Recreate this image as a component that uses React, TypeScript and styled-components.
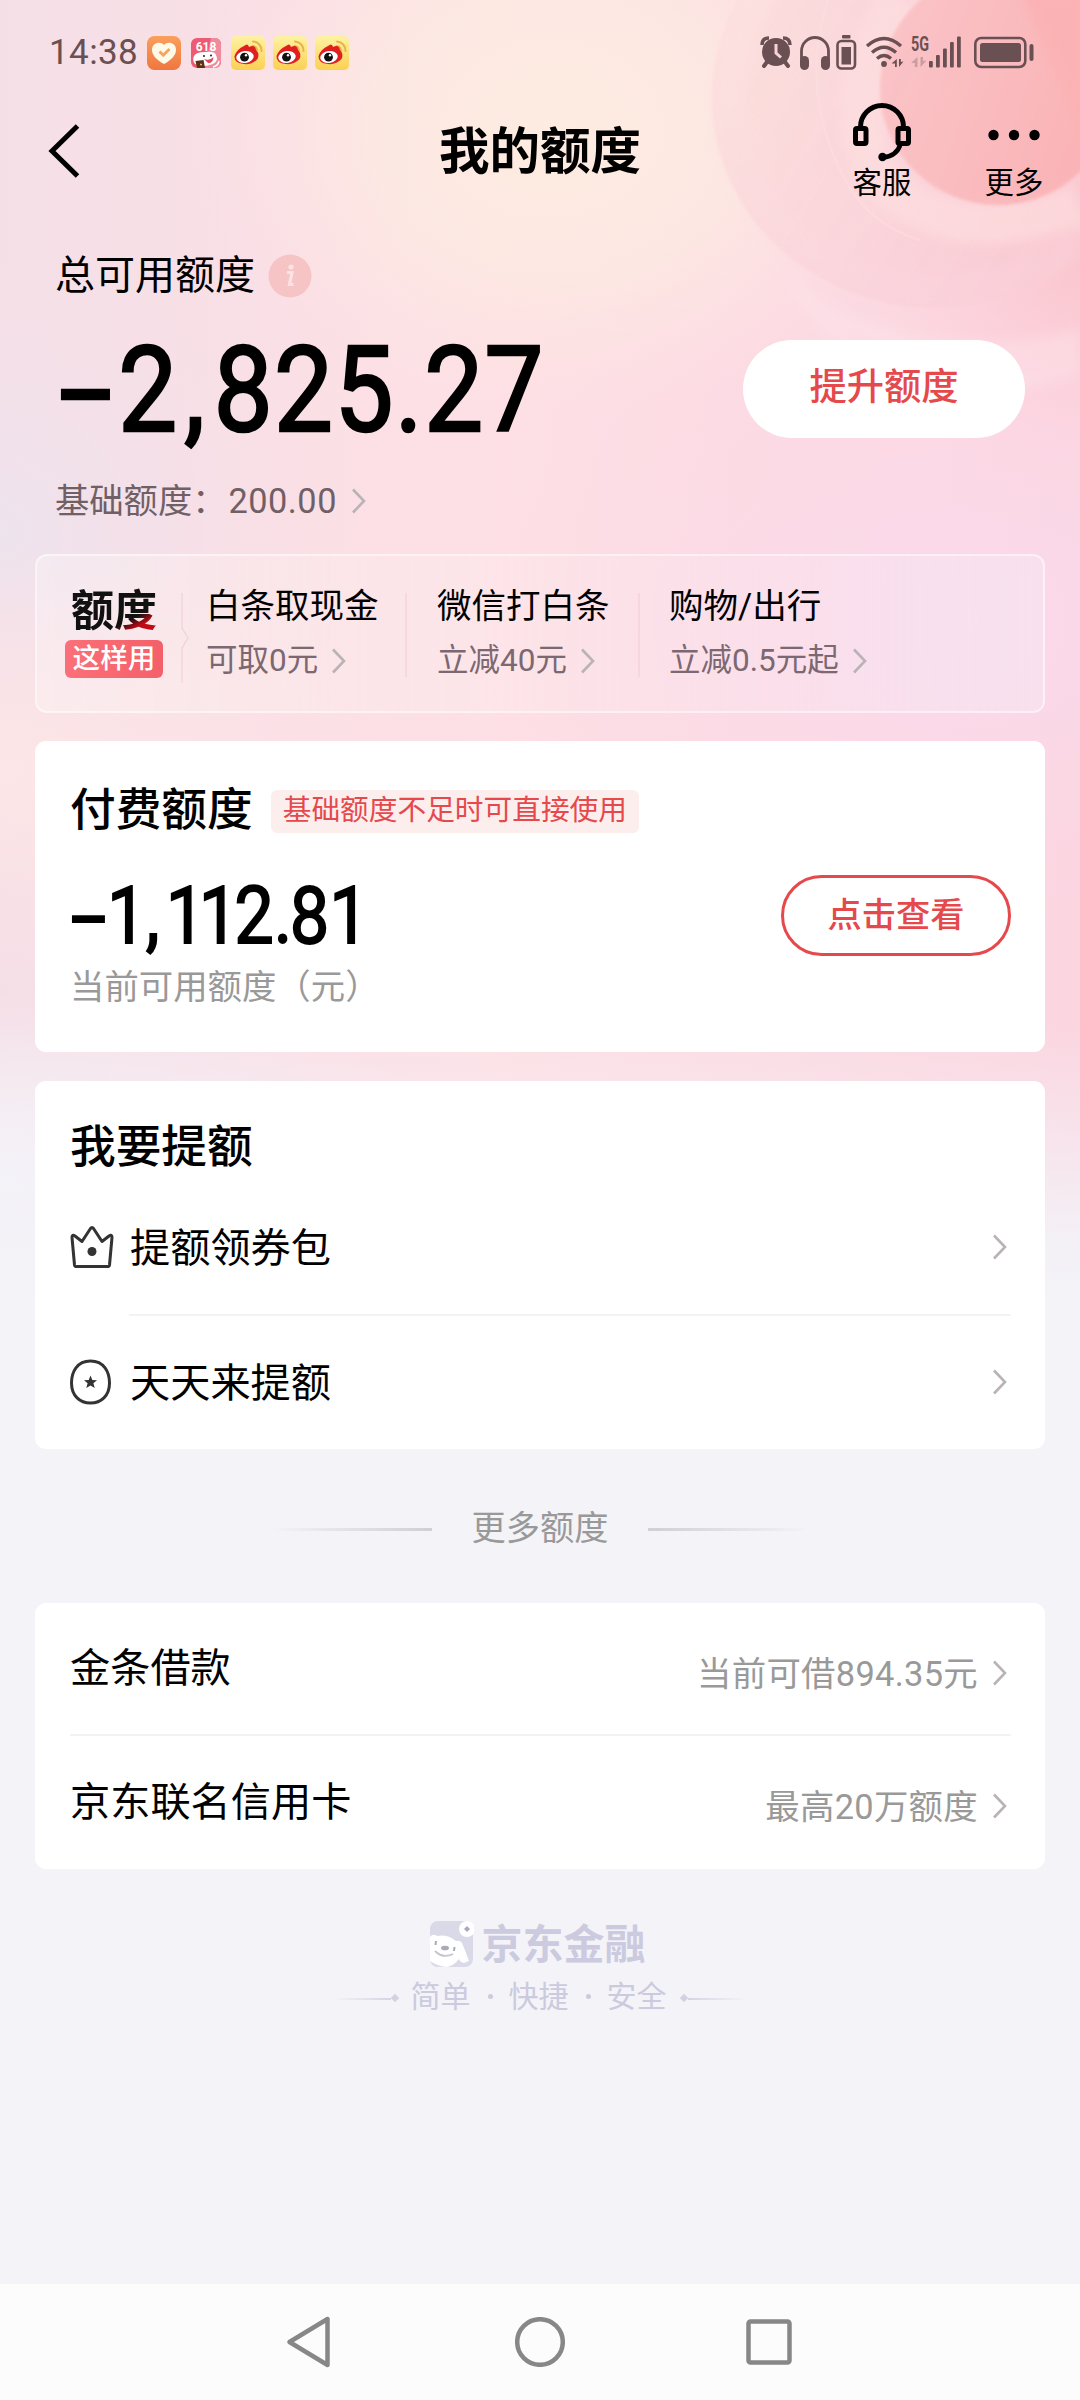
import React from "react";
import styled, { createGlobalStyle } from "styled-components";

const INK = "#6a5053";
const RED = "#e5494c";

const GlobalStyle = createGlobalStyle`
  * { box-sizing: border-box; }
  html, body { margin: 0; padding: 0; background: #f3f3f8; }
  body { font-family: Roboto, "Noto Sans CJK SC", sans-serif; color: #000; }
`;

const Screen = styled.div`
  position: relative;
  width: 1080px;
  height: 2400px;
  overflow: hidden;
  background: #f3f3f8;
  display: flex;
  flex-direction: column;
`;

const Backdrop = styled.svg`
  position: absolute;
  inset: 0 auto auto 0;
  width: 1080px;
  height: 1300px;
`;

const Content = styled.main`
  position: relative;
  flex: 1;
  display: flex;
  flex-direction: column;
`;

/* ---- status bar ---- */

const StatusBar = styled.div`
  height: 106px;
  padding: 0 44px 0 49px;
  display: flex;
  align-items: center;
  justify-content: space-between;
  color: ${INK};
`;

const StatusGroup = styled.div`
  display: flex;
  align-items: center;
`;

const Clock = styled.span`
  width: 98px;
  font-size: 35px;
  line-height: 40px;
  letter-spacing: 0.4px;
`;

const AppIcons = styled.div`
  display: flex;
  align-items: center;
  gap: 8px;
`;

/* ---- title bar ---- */

const TitleBar = styled.header`
  height: 106px;
  padding: 0 36px 17px;
  display: grid;
  grid-template-columns: 1fr auto 1fr;
  grid-template-rows: 89px;
  align-items: center;
`;

const BackIcon = styled.svg`
  margin-left: 10px;
`;

const Title = styled.h1`
  margin: 0;
  padding-top: 2px;
  font-size: 50.5px;
  line-height: 88px;
  font-weight: 700;
`;

const Actions = styled.div`
  justify-self: end;
  display: flex;
  gap: 72px;
`;

const Action = styled.div`
  display: flex;
  flex-direction: column;
  align-items: center;
  font-size: 29.4px;
  line-height: 42px;
  padding-top: 5px;
`;

/* ---- hero ---- */

const Hero = styled.section`
  height: 342px;
  padding: 36px 55px 0;
  display: grid;
  grid-template-columns: 1fr auto;
`;

const HeroText = styled.div`
  display: flex;
  flex-direction: column;
`;

const HeroLabel = styled.div`
  display: flex;
  align-items: center;
  gap: 13px;
  height: 56px;
  font-size: 40px;
  line-height: 56px;
`;

const Figure = styled.div<{ $size: number; $height: number; $indent: number }>`
  height: ${(p) => p.$height}px;
  padding-left: ${(p) => p.$indent}px;
  font-size: ${(p) => p.$size}px;
  line-height: ${(p) => p.$height + 28}px;
  font-weight: 400;
  -webkit-text-stroke: ${(p) => p.$size * 0.022}px #000;
  white-space: nowrap;
  display: flex;
  transform: scaleX(0.88);
  transform-origin: left center;
`;

const SignSlot = styled.span<{ $width: number }>`
  display: flex;
  justify-content: flex-start;
  width: ${(p) => p.$width}px;
`;

const Sign = styled.span`
  transform: scaleX(1.8);
  transform-origin: left center;
`;

const Part = styled.span<{ $gap?: number }>`
  letter-spacing: ${(p) => p.$gap || 0}px;
`;

const BaseLimit = styled.div`
  margin-top: 27px;
  display: flex;
  align-items: center;
  height: 48px;
  font-size: 34.3px;
  line-height: 48px;
  color: #715f66;
`;

const BaseValue = styled.span`
  margin: 0 15px 0 2px;
  letter-spacing: 0.5px;
`;

const RaiseButton = styled.button`
  margin-top: 92px;
  width: 282px;
  height: 98px;
  padding: 0 0 4px;
  border: 0;
  border-radius: 49px;
  background: #fff;
  color: ${RED};
  font: 500 37.3px/60px Roboto, "Noto Sans CJK SC", sans-serif;
`;

/* ---- usage strip ---- */

const UsageStrip = styled.section`
  margin: 0 35px 0 35px;
  height: 159px;
  border: 2px solid rgba(255, 255, 255, 0.5);
  border-radius: 12px;
  background: linear-gradient(90deg, rgba(255, 255, 255, 0.28), rgba(255, 245, 240, 0.3) 20%, rgba(255, 255, 255, 0.14) 60%, rgba(245, 240, 248, 0.35));
  display: flex;
  padding: 28px 0 0 27px;
`;

const UsageMark = styled.div`
  width: 100px;
  display: flex;
  flex-direction: column;
  align-items: center;
`;

const MarkTitle = styled.div`
  height: 54px;
  font-size: 43px;
  line-height: 55px;
  font-weight: 700;
  background: linear-gradient(152deg, #111 67%, #c00a14 78%);
  -webkit-background-clip: text;
  background-clip: text;
  color: transparent;
`;

const MarkBadge = styled.div`
  margin-top: 2px;
  width: 98px;
  height: 38px;
  border-radius: 6px;
  background: linear-gradient(90deg, #fb7078, #f4606a);
  color: #fff;
  font-size: 27.6px;
  line-height: 38px;
  font-weight: 500;
  text-align: center;
`;

const UsageDivider = styled.i`
  width: 2px;
  height: 84px;
  margin-top: 9px;
  background: rgba(200, 120, 150, 0.1);
`;

const Notch = styled.svg`
  margin: 9px 0 0 14px;
`;

const UsageItem = styled.div<{ $width: number; $left: number }>`
  width: ${(p) => p.$width}px;
  margin-left: ${(p) => p.$left}px;
  display: flex;
  flex-direction: column;
`;

const UsageName = styled.div`
  font-size: 34.5px;
  line-height: 45px;
  white-space: nowrap;
`;

const UsageHint = styled.div`
  margin-top: 8px;
  display: flex;
  align-items: center;
  gap: 14px;
  font-size: 31.5px;
  line-height: 48px;
  color: #7b6871;
  white-space: nowrap;
`;

/* ---- cards ---- */

const Card = styled.section<{ $top: number; $height: number }>`
  margin: ${(p) => p.$top}px 35px 0;
  height: ${(p) => p.$height}px;
  padding: 0 34px 0 35px;
  border-radius: 11px;
  background: #fff;
`;

const CardTitle = styled.h2<{ $top?: number }>`
  margin: 0;
  padding-top: ${(p) => p.$top || 0}px;
  font-size: 45.7px;
  line-height: 64px;
  font-weight: 500;
`;

const PaidHead = styled.div`
  padding-top: 38px;
  height: 101px;
  display: flex;
  align-items: center;
  gap: 18px;
`;

const Tag = styled.span`
  height: 43px;
  margin-top: 1px;
  padding: 0 12px;
  border-radius: 6px;
  background: #fdeeee;
  color: ${RED};
  font-size: 28.7px;
  line-height: 41px;
`;

const PaidBody = styled.div`
  display: flex;
  justify-content: space-between;
`;

const PaidNote = styled.div`
  font-size: 34.4px;
  line-height: 48px;
  color: #999;
`;

const ViewButton = styled.button`
  margin-top: 33px;
  width: 230px;
  height: 81px;
  padding: 0 0 2px;
  border: 3px solid ${RED};
  border-radius: 41px;
  background: #fff;
  color: ${RED};
  font: 500 34.2px/50px Roboto, "Noto Sans CJK SC", sans-serif;
`;

const Row = styled.div<{ $height: number }>`
  height: ${(p) => p.$height}px;
  display: flex;
  align-items: center;
  padding-right: 4px;
`;

const RowIcon = styled.span`
  width: 60px;
  height: 48px;
  display: flex;
  align-items: center;
`;

const RowLabel = styled.span<{ $drop?: number }>`
  flex: 1;
  padding-top: ${(p) => p.$drop || 0}px;
  font-size: 40.2px;
  line-height: 56px;
`;

const RowValue = styled.span`
  padding-top: 10px;
  margin-right: 15px;
  font-size: 34.4px;
  line-height: 48px;
  letter-spacing: 0.3px;
  color: #999;
`;

const ChevronBox = styled.span<{ $drop?: number }>`
  display: flex;
  padding-top: ${(p) => p.$drop || 0}px;
`;

const Rule = styled.hr<{ $inset?: number }>`
  margin: 0 0 0 ${(p) => p.$inset || 0}px;
  border: 0;
  height: 2px;
  background: #f3f3f4;
`;

/* ---- section heading and footer ---- */

const MoreHeading = styled.div`
  margin-top: 55px;
  height: 48px;
  display: flex;
  align-items: center;
  justify-content: center;
  gap: 40px;
  font-size: 34.2px;
  line-height: 48px;
  color: #999;
`;

const FadeLine = styled.i<{ $flip?: boolean; $width: number; $color: string; $thick: number }>`
  width: ${(p) => p.$width}px;
  height: ${(p) => p.$thick}px;
  margin-top: 3px;
  background: linear-gradient(${(p) => (p.$flip ? "270deg" : "90deg")}, transparent, ${(p) => p.$color});
`;

const Footer = styled.footer`
  margin-top: 45px;
  display: flex;
  flex-direction: column;
  align-items: center;
  color: #cbcadf;
`;

const Brand = styled.div`
  height: 60px;
  padding: 2px 6px 0 0;
  display: flex;
  align-items: center;
  gap: 8px;
  font-size: 41px;
  line-height: 60px;
  font-weight: 700;
`;

const BrandMark = styled.svg`
  margin-bottom: 2px;
`;

const Motto = styled.div`
  display: flex;
  align-items: center;
  justify-content: center;
  height: 44px;
  padding: 2px 2px 0 0;
  font-size: 30px;
  line-height: 44px;
`;

const MottoWords = styled.span`
  display: flex;
  margin: 0 13px 0 12px;
`;

const MottoDot = styled.i`
  width: 5px;
  height: 5px;
  border-radius: 3px;
  margin: 19px 16px 0 17px;
  background: #cbcadf;
`;

const Diamond = styled.i`
  width: 6px;
  height: 6px;
  margin: 2px 1px 0;
  transform: rotate(45deg);
  background: #d3d2e2;
`;

const NavBar = styled.nav`
  position: relative;
  height: 116px;
  background: #fcfcfc;
  display: flex;
  justify-content: center;
  align-items: center;
  gap: 184px;
`;

const RecentsIcon = styled.svg`
  margin: 0 3px 0 -3px;
`;

const Chevron = () => (
  <svg width="14" height="26" viewBox="0 0 14 26" fill="none" stroke="#b9b3b6" strokeWidth="2.6">
    <path d="M1 1.5 L12 13 L1 24.5" />
  </svg>
);

const Weibo = () => (
  <svg width="34" height="34" viewBox="0 0 34 34">
    <defs>
      <linearGradient id="wb" x1="0" y1="0" x2="0" y2="1">
        <stop offset="0" stopColor="#fdf3a4" />
        <stop offset="1" stopColor="#fbd053" />
      </linearGradient>
    </defs>
    <rect width="34" height="34" rx="5" fill="url(#wb)" />
    <path d="M22 5.500 A9 9 0 0 1 30.500 15 M21.500 10 A5 5 0 0 1 26 14.500" fill="none" stroke="#eeb04a" strokeWidth="2" strokeLinecap="round" />
    <path d="M13 10 Q17 6.500 18 11 Q24 8 25 14 Q29 18 26.500 23 Q21 29 13 28 Q3 27 3.500 20 Q6 13 13 10Z" fill="#e02020" />
    <ellipse cx="14" cy="21" rx="8.800" ry="6" fill="#fff" transform="rotate(-8 14 21)" />
    <circle cx="13.500" cy="21.200" r="4.400" fill="#111" />
    <circle cx="15" cy="19.300" r="1.200" fill="#fff" />
  </svg>
);

const HeartApp = () => (
  <svg width="34" height="34" viewBox="0 0 34 34">
    <defs>
      <linearGradient id="hb" x1="0" y1="0" x2="0" y2="1">
        <stop offset="0" stopColor="#fa9f5c" />
        <stop offset="1" stopColor="#ef7740" />
      </linearGradient>
    </defs>
    <rect width="34" height="34" rx="7.500" fill="url(#hb)" />
    <path d="M17 28 C8 23 5 18 5 14 C5 6.500 13.500 5 17 9 C20.500 5 29 6.500 29 14 C29 18 26 23 17 28Z" fill="#fff9ea" />
    <path d="M12.500 15.500 L16.300 19.200 L22.500 13" fill="none" stroke="#f5a45a" strokeWidth="2.800" />
  </svg>
);

const Sale618 = () => (
  <svg width="34" height="34" viewBox="-2 -2 34 34">
    <rect width="30" height="30" rx="6" fill="#ee5a73" />
    <path d="M20 0 H24 A6 6 0 0 1 30 6 V24 A6 6 0 0 1 24 30 H14Z" fill="#f08a9d" />
    <text x="15" y="13" textAnchor="middle" fontSize="12" fontWeight="700" fill="#fff" fontFamily="Roboto">618</text>
    <path d="M3 18 Q5 14 14 14 Q24 13 25 17 Q28 23 22 26 Q12 30 4 26 Q1 22 3 18Z" fill="#fff" />
    <path d="M13 21 Q19 23 22.500 19 Q22 25.500 17 25Z" fill="#e24b5e" />
    <circle cx="13" cy="18" r="1" fill="#222" />
    <circle cx="20" cy="17.500" r="1" fill="#222" />
    <path d="M4.500 23 L12.500 22 L14 30 H6Z" fill="#5a3018" />
    <path d="M9 26.500h2" stroke="#e9b35a" strokeWidth="1.500" />
    <path d="M22 29 Q27 28 28 23" fill="none" stroke="#fff" strokeWidth="1.500" />
  </svg>
);

const StatusIcons = () => (
  <svg width="276" height="38" viewBox="760 34 276 38" fill={INK}>
    {/* alarm clock */}
    <circle cx="776" cy="52" r="14" />
    <path d="M762 45 Q762 38 769 38 M790 45 Q790 38 783 38" fill="none" stroke={INK} strokeWidth="3.500" />
    <path d="M767 62 L764 66 M785 62 L788 66" stroke={INK} strokeWidth="4" strokeLinecap="round" />
    <path d="M776 44 V53 L781 57.500" fill="none" stroke="#f7d3d6" strokeWidth="3" />
    {/* headphones */}
    <path d="M801.500 60 V51 A13.300 13.300 0 0 1 828.500 51 V60" fill="none" stroke={INK} strokeWidth="2.800" />
    <rect x="800" y="56" width="9" height="14" rx="4.500" />
    <rect x="821" y="56" width="9" height="14" rx="4.500" />
    {/* accessory battery */}
    <rect x="842" y="35" width="8.500" height="3.500" rx="1" />
    <rect x="837.500" y="41" width="17.500" height="27.500" rx="4" fill="none" stroke={INK} strokeWidth="2.600" />
    <rect x="841.500" y="47" width="9.500" height="17.500" />
    {/* wi-fi */}
    <g fill="none" stroke={INK} strokeWidth="3.400">
      <path d="M867 46 Q884 31 901 46" />
      <path d="M872 52.500 Q884 42 896 52.500" />
      <path d="M877 58.500 Q884 52.500 891 58.500" />
    </g>
    <circle cx="884" cy="64" r="2.900" />
    <path d="M896.800 59 V67 H895 V63.500 H891.500Z M899 67 V59 H900.800 V62 L903.500 61.500Z" />
    {/* cellular */}
    <text x="911" y="50.500" fontSize="19.500" fontWeight="700" fontFamily="Roboto" textLength="18" lengthAdjust="spacingAndGlyphs">5G</text>
    <path d="M917.500 57 V67 H914.800 V63 H911Z M920.500 67 V57 H923 V61 L926.500 60.500 Z" opacity="0.32" />
    <rect x="929" y="61" width="3.800" height="6.500" rx="1" />
    <rect x="936" y="55" width="3.800" height="12.500" rx="1" />
    <rect x="943" y="48.500" width="3.800" height="19" rx="1" />
    <rect x="950" y="42" width="3.800" height="25.500" rx="1" />
    <rect x="957" y="36.500" width="3.800" height="31" rx="1" />
    {/* battery */}
    <rect x="975.300" y="38" width="50" height="29" rx="6" fill="none" stroke={INK} strokeWidth="2.600" />
    <rect x="980" y="43" width="41" height="19" rx="2.500" />
    <rect x="1029.500" y="44" width="4" height="17" rx="2" />
  </svg>
);

const Headset = () => (
  <svg width="60" height="60" viewBox="0 0 60 60" fill="none" stroke="#000" strokeWidth="5">
    <path d="M8.500 25 A21.500 21.500 0 0 1 51.500 25" />
    <rect x="3.500" y="26.500" width="10.500" height="15" rx="1.500" />
    <rect x="46" y="26.500" width="10.500" height="15" rx="1.500" />
    <path d="M48.500 42 Q45 54 31 55.500" strokeWidth="4.500" />
    <circle cx="30.500" cy="55" r="4.200" fill="#000" stroke="none" />
  </svg>
);

const Dots = () => (
  <svg width="60" height="60" viewBox="0 0 60 60">
    <circle cx="9.500" cy="33" r="5.200" />
    <circle cx="30" cy="33" r="5.200" />
    <circle cx="50.500" cy="33" r="5.200" />
  </svg>
);

const InfoDot = () => (
  <svg width="44" height="44" viewBox="0 0 44 44">
    <circle cx="22" cy="22" r="21.500" fill="#f7c4c6" />
    <circle cx="23" cy="13" r="2.600" fill="#fbe3e3" />
    <path d="M19 18.500 H24 L21.500 30.500 H25.500" fill="none" stroke="#fbe3e3" strokeWidth="3.200" />
  </svg>
);

const Scenery = () => (
  <Backdrop viewBox="0 0 1080 1300">
    <defs>
      <linearGradient id="base" x1="0" y1="0" x2="1" y2="0">
        <stop offset="0" stopColor="#f5dfe7" />
        <stop offset="0.450" stopColor="#fde0e5" />
        <stop offset="1" stopColor="#fbd5e0" />
      </linearGradient>
      <radialGradient id="cream">
        <stop offset="0" stopColor="#fdece1" />
        <stop offset="0.500" stopColor="#fdeae2" stopOpacity="0.800" />
        <stop offset="1" stopColor="#fde4e4" stopOpacity="0" />
      </radialGradient>
      <radialGradient id="lilac">
        <stop offset="0" stopColor="#ece4ef" stopOpacity="0.850" />
        <stop offset="1" stopColor="#f3e0ea" stopOpacity="0" />
      </radialGradient>
      <radialGradient id="orchid">
        <stop offset="0" stopColor="#fad9ec" />
        <stop offset="1" stopColor="#fcd9e6" stopOpacity="0" />
      </radialGradient>
      <radialGradient id="blush">
        <stop offset="0" stopColor="#fde6e6" />
        <stop offset="1" stopColor="#fde3e6" stopOpacity="0" />
      </radialGradient>
      <linearGradient id="core" x1="0" y1="0" x2="1" y2="0.300">
        <stop offset="0" stopColor="#fbc4c7" />
        <stop offset="1" stopColor="#fbb2b4" />
      </linearGradient>
      <radialGradient id="glow">
        <stop offset="0" stopColor="#fab8be" stopOpacity="0.650" />
        <stop offset="1" stopColor="#fcc8d2" stopOpacity="0" />
      </radialGradient>
      <linearGradient id="orb" x1="0" y1="0" x2="1" y2="0.600">
        <stop offset="0" stopColor="#fde2dd" stopOpacity="0.900" />
        <stop offset="0.450" stopColor="#f9d3d7" stopOpacity="0.750" />
        <stop offset="1" stopColor="#f9c9d2" stopOpacity="0.500" />
      </linearGradient>
      <linearGradient id="rim" x1="0" y1="0" x2="0.500" y2="1">
        <stop offset="0" stopColor="#fee5e1" />
        <stop offset="1" stopColor="#fbd6df" stopOpacity="0.400" />
      </linearGradient>
      <linearGradient id="fade" x1="0" y1="0" x2="0" y2="1">
        <stop offset="0" stopColor="#f3f3f8" stopOpacity="0" />
        <stop offset="0.800" stopColor="#f3f3f8" stopOpacity="0.920" />
        <stop offset="1" stopColor="#f3f3f8" />
      </linearGradient>
      <radialGradient id="mist">
        <stop offset="0" stopColor="#f5f2f8" />
        <stop offset="1" stopColor="#f5eef5" stopOpacity="0" />
      </radialGradient>
      <filter id="soft" x="-20%" y="-20%" width="140%" height="140%">
        <feGaussianBlur stdDeviation="6" />
      </filter>
      <filter id="edge" x="-5%" y="-5%" width="110%" height="110%">
        <feGaussianBlur stdDeviation="1.500" />
      </filter>
    </defs>
    <rect width="1080" height="1300" fill="url(#base)" />
    <ellipse cx="0" cy="530" rx="280" ry="280" fill="url(#lilac)" />
    <ellipse cx="560" cy="130" rx="370" ry="290" fill="url(#cream)" />
    <ellipse cx="0" cy="770" rx="420" ry="220" fill="url(#blush)" />
    <ellipse cx="960" cy="620" rx="480" ry="330" fill="url(#orchid)" />
    <ellipse cx="0" cy="1180" rx="500" ry="190" fill="url(#mist)" />
    <ellipse cx="1090" cy="240" rx="220" ry="220" fill="url(#glow)" />
    <path d="M780 270 Q860 440 1080 376 V330 Q900 370 780 270Z" fill="#fde2e9" opacity="0.500" filter="url(#soft)" />
    <ellipse cx="936" cy="98" rx="224" ry="210" fill="url(#orb)" opacity="0.850" filter="url(#edge)" />
    <ellipse cx="936" cy="98" rx="206" ry="194" fill="none" stroke="url(#rim)" strokeWidth="32" opacity="0.750" filter="url(#soft)" />
    <path d="M828 0 Q798 90 845 180 Q870 225 920 240" fill="none" stroke="#fcdfe0" strokeWidth="2.500" opacity="0.450" />
    <path d="M900 0 Q830 110 885 185 Q960 250 1080 205" fill="none" stroke="#fee0e0" strokeWidth="40" opacity="0.600" filter="url(#soft)" />
    <ellipse cx="998" cy="88" rx="118" ry="117" fill="url(#core)" opacity="0.920" filter="url(#edge)" />
    <path d="M1020 -10 H1090 V160 Z" fill="#fbb2b4" filter="url(#soft)" />
    <rect y="1020" width="1080" height="280" fill="url(#fade)" />
  </Backdrop>
);

const usages = [
  { name: "白条取现金", hint: "可取0元", width: 199, left: 2 },
  { name: "微信打白条", hint: "立减40元", width: 201, left: 30 },
  { name: "购物/出行", hint: "立减0.5元起", width: 220, left: 29 },
];

export default function App() {
  return (
    <Screen>
      <GlobalStyle />
      <Scenery />
      <Content>
        <StatusBar>
          <StatusGroup>
            <Clock>14:38</Clock>
            <AppIcons>
              <HeartApp />
              <Sale618 />
              <Weibo />
              <Weibo />
              <Weibo />
            </AppIcons>
          </StatusGroup>
          <StatusIcons />
        </StatusBar>

        <TitleBar>
          <BackIcon width="34" height="56" viewBox="0 0 34 56" fill="none" stroke="#000" strokeWidth="5">
            <path d="M31.500 3 L6 28 L31.500 53" />
          </BackIcon>
          <Title>我的额度</Title>
          <Actions>
            <Action>
              <Headset />
              客服
            </Action>
            <Action>
              <Dots />
              更多
            </Action>
          </Actions>
        </TitleBar>

        <Hero>
          <HeroText>
            <HeroLabel>
              总可用额度
              <InfoDot />
            </HeroLabel>
            <Figure $size={119} $height={146} $indent={5}>
              <SignSlot $width={67}>
                <Sign>-</Sign>
              </SignSlot>
              <Part $gap={8}>2</Part>
              <Part $gap={10}>,</Part>
              <Part $gap={1.8}>825.27</Part>
            </Figure>
            <BaseLimit>
              基础额度：
              <BaseValue>200.00</BaseValue>
              <Chevron />
            </BaseLimit>
          </HeroText>
          <RaiseButton>提升额度</RaiseButton>
        </Hero>

        <UsageStrip>
          <UsageMark>
            <MarkTitle>额度</MarkTitle>
            <MarkBadge>这样用</MarkBadge>
          </UsageMark>
          <Notch width="26" height="90" viewBox="0 0 26 90" fill="none" stroke="rgba(200,120,150,0.16)" strokeWidth="1.500">
            <path d="M4 0 V35 L10 45 L4 55 V90" />
          </Notch>
          {usages.map((u, i) => (
            <React.Fragment key={u.name}>
              {i > 0 && <UsageDivider />}
              <UsageItem $width={u.width} $left={u.left}>
                <UsageName>{u.name}</UsageName>
                <UsageHint>
                  {u.hint}
                  <Chevron />
                </UsageHint>
              </UsageItem>
            </React.Fragment>
          ))}
        </UsageStrip>

        <Card $top={28} $height={311}>
          <PaidHead>
            <CardTitle>付费额度</CardTitle>
            <Tag>基础额度不足时可直接使用</Tag>
          </PaidHead>
          <PaidBody>
            <div>
              <Figure $size={80} $height={121} $indent={1}>
                <SignSlot $width={41}>
                  <Sign>-</Sign>
                </SignSlot>
                <Part $gap={-1}>1</Part>
                <Part $gap={7}>,</Part>
                <Part $gap={-7.5}>1</Part>
                <Part $gap={-4.5}>1</Part>
                <Part>2</Part>
                <Part $gap={-3}>.</Part>
                <Part>81</Part>
              </Figure>
              <PaidNote>当前可用额度（元）</PaidNote>
            </div>
            <ViewButton>点击查看</ViewButton>
          </PaidBody>
        </Card>

        <Card $top={29} $height={368}>
          <CardTitle $top={35}>我要提额</CardTitle>
          <Row $height={134}>
            <RowIcon>
              <svg width="44" height="44" viewBox="0 0 44 44" fill="none" stroke="#333" strokeWidth="3" strokeLinejoin="round">
                <path d="M2 12.500 Q2 9 5 11 L12 16.500 L20.500 3.500 Q22 1.500 23.500 3.500 L32 16.500 L39 11 Q42 9 42 12.500 L39.500 40 Q39.300 41.500 37.500 41.500 H6.500 Q4.700 41.500 4.500 40Z" />
                <circle cx="22" cy="26.500" r="4.500" fill="#333" stroke="none" />
              </svg>
            </RowIcon>
            <RowLabel $drop={3}>提额领券包</RowLabel>
            <Chevron />
          </Row>
          <Rule $inset={59} />
          <Row $height={132}>
            <RowIcon>
              <svg width="42" height="46" viewBox="0 0 42 46" fill="none" stroke="#333" strokeWidth="3">
                <path d="M20.500 2 C34 2 39.500 13 39.500 24 C39.500 37 31 44 20.500 44 C10 44 1.500 37 1.500 24 C1.500 13 7 2 20.500 2Z" />
                <path d="M20.500 16.500 L22.300 21 L27 21.300 L23.400 24.300 L24.700 29 L20.500 26.400 L16.300 29 L17.600 24.300 L14 21.300 L18.700 21Z" fill="#333" stroke="none" />
              </svg>
            </RowIcon>
            <RowLabel $drop={3}>天天来提额</RowLabel>
            <Chevron />
          </Row>
        </Card>

        <MoreHeading>
          <FadeLine $width={162} $color="#d0d0d2" $thick={3} />
          更多额度
          <FadeLine $flip $width={162} $color="#d0d0d2" $thick={3} />
        </MoreHeading>

        <Card $top={51} $height={266}>
          <Row $height={131}>
            <RowLabel>金条借款</RowLabel>
            <RowValue>当前可借894.35元</RowValue>
            <ChevronBox $drop={9}>
              <Chevron />
            </ChevronBox>
          </Row>
          <Rule />
          <Row $height={132}>
            <RowLabel $drop={2}>京东联名信用卡</RowLabel>
            <RowValue>最高20万额度</RowValue>
            <ChevronBox $drop={8}>
              <Chevron />
            </ChevronBox>
          </Row>
        </Card>

        <Footer>
          <Brand>
            <BrandMark width="45" height="48" viewBox="0 0 45 48">
              <rect x="1" y="1" width="43" height="46" rx="8" fill="#d9d9e8" />
              <path d="M1 17 Q4 13 8 16 Q18 14 27 21 Q31 20 33 23 Q36 30 40 41 L35 43 Q31 42 30 39 Q25 46 17 47 Q8 46 1 41Z" fill="#fff" />
              <circle cx="38" cy="9" r="8" fill="#fff" />
              <path d="M38 6 L41 9 L38 12 L35 9Z" fill="#a9a9bd" />
              <ellipse cx="16" cy="28" rx="4" ry="2.300" fill="#a9a9b9" />
              <path d="M7 21 L6.500 25 M25.500 27 L25 31" stroke="#a9a9b9" strokeWidth="2" />
              <path d="M6 31 Q14 39 24 34" fill="none" stroke="#c5c5d2" strokeWidth="1.800" />
            </BrandMark>
            京东金融
          </Brand>
          <Motto>
            <FadeLine $width={58} $color="#d5d4e3" $thick={2} />
            <Diamond />
            <MottoWords>
              简单
              <MottoDot />
              快捷
              <MottoDot />
              安全
            </MottoWords>
            <Diamond />
            <FadeLine $flip $width={58} $color="#d5d4e3" $thick={2} />
          </Motto>
        </Footer>
      </Content>

      <NavBar>
        <svg width="46" height="54" viewBox="0 0 46 54" fill="none" stroke="#878787" strokeWidth="4.500" strokeLinejoin="round">
          <path d="M42.500 4 V50 L4.500 27Z" />
        </svg>
        <svg width="50" height="50" viewBox="0 0 50 50" fill="none" stroke="#878787" strokeWidth="4.500">
          <circle cx="25" cy="25" r="22.800" />
        </svg>
        <RecentsIcon width="46" height="46" viewBox="0 0 46 46" fill="none" stroke="#878787" strokeWidth="4.500">
          <rect x="2.500" y="2.500" width="41" height="41" rx="2" />
        </RecentsIcon>
      </NavBar>
    </Screen>
  );
}
